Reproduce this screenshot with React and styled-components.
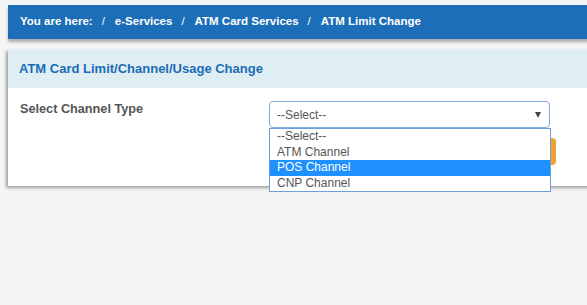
import styled, { createGlobalStyle } from 'styled-components'

const GlobalStyle = createGlobalStyle`
    body {
        margin: 0;
        padding: 0;
        background-color: #f5f5f5;
        font-family: "Liberation Sans", Arial, sans-serif;
    }
`

const crumbs = ['e-Services', 'ATM Card Services', 'ATM Limit Change']
const options = ['--Select--', 'ATM Channel', 'POS Channel', 'CNP Channel']

const App = () => {
    return (
        <Page>
            <GlobalStyle />
            <Breadcrumb>
                <CrumbLabel>You are here:</CrumbLabel>
                {crumbs.map((c) => (
                    <span key={c}>
                        <Slash>/</Slash>
                        <Crumb>{c}</Crumb>
                    </span>
                ))}
            </Breadcrumb>
            <Panel>
                <PanelHeader>
                    <PanelTitle>ATM Card Limit/Channel/Usage Change</PanelTitle>
                </PanelHeader>
                <PanelBody>
                    <FieldLabel>Select Channel Type</FieldLabel>
                    <SelectWrap>
                        <SelectBox>
                            <span>--Select--</span>
                            <Arrow />
                        </SelectBox>
                        <OptionList>
                            {options.map((o) => (
                                <Option key={o} $active={o === 'POS Channel'}>
                                    {o}
                                </Option>
                            ))}
                        </OptionList>
                    </SelectWrap>
                    <Spacer />
                    <ButtonCell>
                        <SubmitButton>Submit</SubmitButton>
                    </ButtonCell>
                </PanelBody>
            </Panel>
        </Page>
    )
}

const Page = styled.div`
    box-sizing: border-box;
    width: 100vw;
    height: 100vh;
    padding: 5px 0 0 8px;
    overflow: hidden;
`

const Breadcrumb = styled.nav`
    display: flex;
    align-items: center;
    width: calc(100% + 30px);
    height: 34px;
    box-sizing: border-box;
    padding: 0 0 2px 12px;
    background-color: #1c6eb8;
    color: #fff;
    font-size: 11.5px;
    font-weight: bold;
    box-shadow: 0 3px 3px rgba(0, 0, 0, 0.3);
`

const CrumbLabel = styled.span``

const Crumb = styled.span``

const Slash = styled.span`
    font-weight: normal;
    margin: 0 10px 0 9px;
`

const Panel = styled.section`
    width: calc(100% + 30px);
    margin-top: 10px;
    background-color: #fff;
    box-shadow: -2px 2px 3px rgba(0, 0, 0, 0.35);
`

const PanelHeader = styled.header`
    display: flex;
    align-items: center;
    height: 39px;
    padding-left: 11px;
    background-color: #dfeef3;
`

const PanelTitle = styled.h2`
    margin: 0;
    font-size: 13px;
    font-weight: bold;
    color: #1b6cb6;
`

const PanelBody = styled.div`
    display: grid;
    grid-template-columns: 249px 281px;
    row-gap: 10px;
    padding: 13px 0 21px 12px;
`

const FieldLabel = styled.label`
    font-size: 12.7px;
    font-weight: bold;
    color: #555;
    line-height: 15px;
    padding-top: 1px;
`

const SelectWrap = styled.div`
    position: relative;
`

const SelectBox = styled.div`
    display: flex;
    align-items: center;
    justify-content: space-between;
    height: 27px;
    box-sizing: border-box;
    padding: 0 8px 0 7px;
    border: 1px solid #82abd9;
    border-radius: 4px;
    background-color: #fff;
    color: #555;
    font-size: 12px;
`

const Arrow = styled.span`
    width: 0;
    height: 0;
    border-left: 3.5px solid transparent;
    border-right: 3.5px solid transparent;
    border-top: 6px solid #444;
    margin-top: 1px;
`

const OptionList = styled.ul`
    position: absolute;
    top: 27px;
    left: 0;
    width: 282px;
    box-sizing: border-box;
    margin: 0;
    padding: 0;
    list-style: none;
    background-color: #fff;
    border: 1px solid #6f9fd8;
    z-index: 2;
`

const Option = styled.li`
    height: 15.5px;
    line-height: 15.5px;
    padding-left: 7px;
    font-size: 12px;
    color: ${(p) => (p.$active ? '#fff' : '#555')};
    background-color: ${(p) => (p.$active ? '#1e90ff' : 'transparent')};
`

const Spacer = styled.div``

const ButtonCell = styled.div`
    display: flex;
    justify-content: flex-end;
    margin-right: -6px;
`

const SubmitButton = styled.button`
    height: 27px;
    padding: 0 20px;
    border: none;
    border-radius: 4px;
    background-color: #f0a030;
    color: #fff;
    font-family: inherit;
    font-size: 12px;
    font-weight: bold;
`

export default App
